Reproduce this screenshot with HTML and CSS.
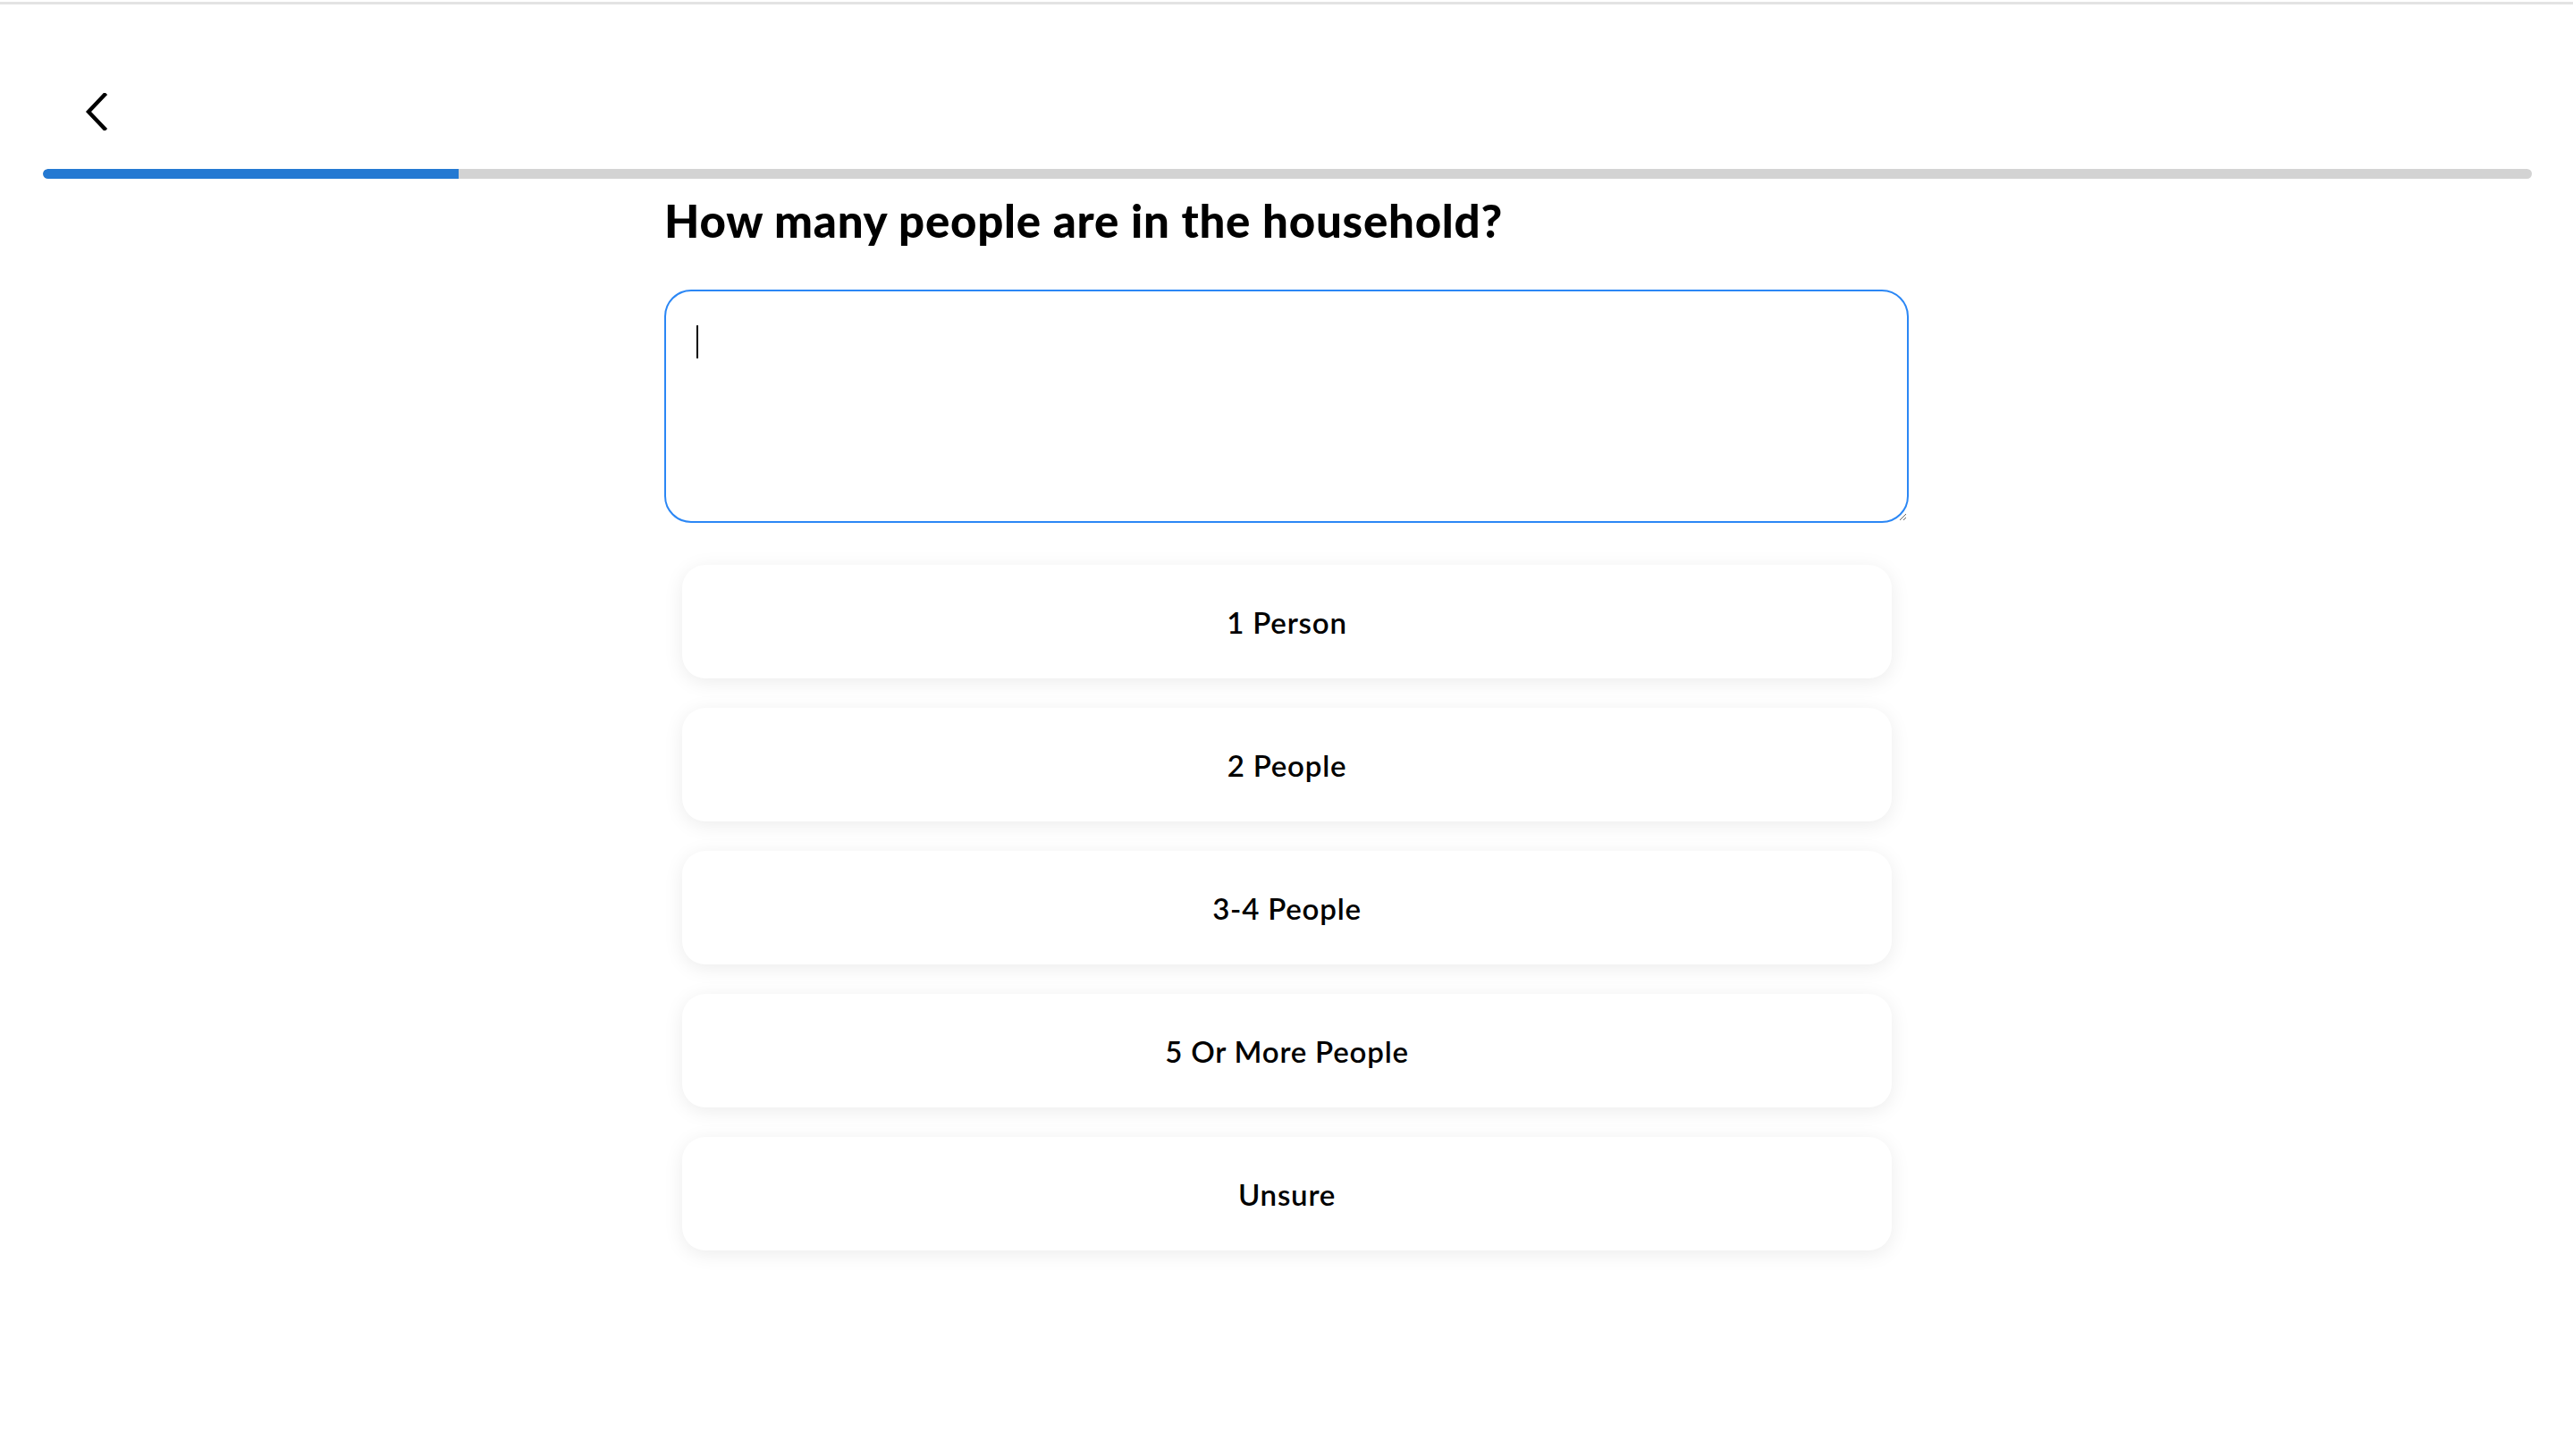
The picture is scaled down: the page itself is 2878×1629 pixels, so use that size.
FILE: index.html
```html
<!DOCTYPE html>
<html lang="en">
<head>
<meta charset="utf-8">
<title>Household</title>
<link rel="stylesheet" href="styles.css">
</head>
<body>
<div class="topline"></div>
<header class="header">
  <button class="back" aria-label="Back">
    <svg width="26" height="42" viewBox="0 0 26 42"><path d="M22 2 L4 21 L22 40" fill="none" stroke="#000" stroke-width="4.4" stroke-linecap="square"/></svg>
  </button>
</header>
<div class="progress"><div class="progress-fill" style="width:16.7%"></div></div>
<main class="content">
  <h1 class="question">How many people are in the household?</h1>
  <div class="answer-wrap">
    <textarea class="answer" autofocus></textarea>
    <span class="caret"></span>
  </div>
  <div class="options">
    <button class="option">1 Person</button>
    <button class="option">2 People</button>
    <button class="option">3-4 People</button>
    <button class="option">5 Or More People</button>
    <button class="option">Unsure</button>
  </div>
</main>
</body>
</html>
```
FILE: styles.css
```css
html, body {
  margin: 0;
  padding: 0;
  background: #fff;
  font-family: "Lato", "Open Sans", sans-serif;
  color: #000;
}
body {
  padding-bottom: 80px;
}
.topline {
  height: 3px;
  margin-top: 2px;
  background: #e3e3e3;
}
.header {
  height: 184px;
  box-sizing: border-box;
  padding: 99px 0 0 95px;
}
.back {
  border: 0;
  background: none;
  padding: 0;
  margin: 0;
  display: block;
  cursor: pointer;
}
.progress {
  margin: 0 46px 0 48px;
  height: 11px;
  border-radius: 6px;
  background: #d3d3d3;
  overflow: hidden;
}
.progress-fill {
  height: 100%;
  background: #2479d2;
  border-radius: 6px 0 0 6px;
}
.content {
  width: 1392px;
  margin: 0 auto;
  display: flex;
  flex-direction: column;
}
.question {
  margin: 13px 0 0 0;
  font-size: 51px;
  font-weight: 900;
  line-height: 68px;
  letter-spacing: 0.75px;
}
.answer-wrap {
  position: relative;
  margin-top: 43px;
  display: flex;
}
.answer {
  flex: 1;
  height: 261px;
  box-sizing: border-box;
  border: 2px solid #2b87f5;
  border-radius: 30px;
  outline: none;
  padding: 36px 34px;
  font-family: "Lato", sans-serif;
  font-size: 36px;
  resize: vertical;
  caret-color: transparent;
}
.caret {
  position: absolute;
  left: 36px;
  top: 40px;
  width: 2px;
  height: 37px;
  background: #000;
}
.options {
  display: flex;
  flex-direction: column;
  gap: 33px;
  padding: 47px 19px 0 20px;
}
.option {
  height: 127px;
  border: 0;
  border-radius: 26px;
  background: #fff;
  box-shadow: 0 4px 22px rgba(0, 0, 0, 0.08);
  font-family: "Lato", sans-serif;
  font-size: 33px;
  font-weight: 600;
  color: #000;
  letter-spacing: 0.8px;
  cursor: pointer;
}
```
